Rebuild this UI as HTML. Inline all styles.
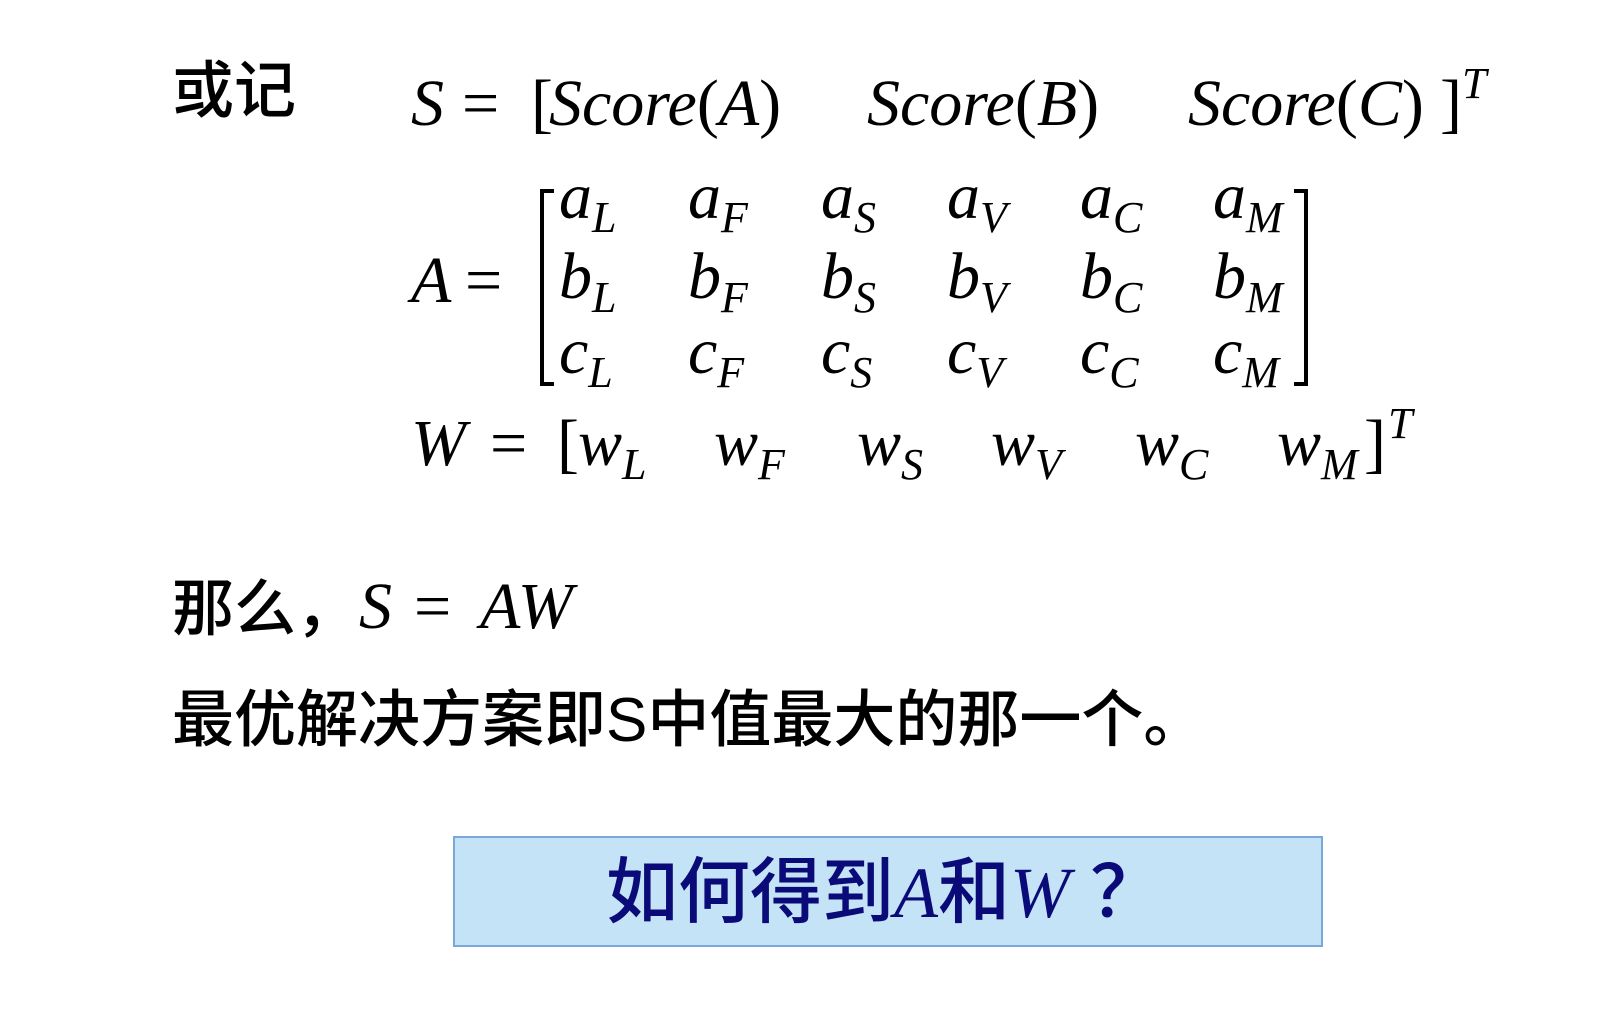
<!DOCTYPE html>
<html><head><meta charset="utf-8"><style>
body{margin:0;width:1614px;height:1026px;background:#fff;position:relative;overflow:hidden}
.c{position:absolute;font-family:"Liberation Sans","Noto Sans CJK SC",sans-serif;font-weight:500;line-height:1;color:#000;white-space:nowrap}
.m{position:absolute;font-family:"Liberation Serif",serif;font-style:italic;font-size:66px;line-height:1;color:#000;white-space:nowrap}
.u{font-size:44px;position:relative;top:14px}
.n{font-style:normal}
.box{position:absolute;left:453px;top:836px;width:866px;height:107px;background:#c5e3f7;border:2px solid #7ba7db}
</style></head><body>
<div class="c" style="left:172px;top:61px;font-size:62px">或记</div>
<div class="m" style="left:411px;top:71px">S</div>
<div class="m n" style="left:462px;top:71px">=</div>
<div class="m n" style="left:531px;top:71px">[</div>
<div class="m" style="left:549px;top:71px">Score<span class="n">(</span>A<span class="n">)</span></div>
<div class="m" style="left:867px;top:71px">Score<span class="n">(</span>B<span class="n">)</span></div>
<div class="m" style="left:1188px;top:71px">Score<span class="n">(</span>C<span class="n">)</span></div>
<div class="m n" style="left:1440px;top:71px">]</div>
<div class="m" style="left:1462px;top:62px;font-size:44px">T</div>

<div class="m" style="left:411px;top:248px">A</div>
<div class="m n" style="left:465px;top:248px">=</div>
<div style="position:absolute;left:540px;top:189px;width:10px;height:189px;border:4px solid #000;border-right:none"></div>
<div style="position:absolute;left:1294px;top:189px;width:10px;height:189px;border:4px solid #000;border-left:none"></div>

<div class="m" style="left:559px;top:164px">a<span class="u">L</span></div>
<div class="m" style="left:688px;top:164px">a<span class="u">F</span></div>
<div class="m" style="left:821px;top:164px">a<span class="u">S</span></div>
<div class="m" style="left:947px;top:164px">a<span class="u">V</span></div>
<div class="m" style="left:1080px;top:164px">a<span class="u">C</span></div>
<div class="m" style="left:1213px;top:164px">a<span class="u">M</span></div>

<div class="m" style="left:559px;top:244px">b<span class="u">L</span></div>
<div class="m" style="left:688px;top:244px">b<span class="u">F</span></div>
<div class="m" style="left:821px;top:244px">b<span class="u">S</span></div>
<div class="m" style="left:947px;top:244px">b<span class="u">V</span></div>
<div class="m" style="left:1080px;top:244px">b<span class="u">C</span></div>
<div class="m" style="left:1213px;top:244px">b<span class="u">M</span></div>

<div class="m" style="left:559px;top:319px">c<span class="u">L</span></div>
<div class="m" style="left:688px;top:319px">c<span class="u">F</span></div>
<div class="m" style="left:821px;top:319px">c<span class="u">S</span></div>
<div class="m" style="left:947px;top:319px">c<span class="u">V</span></div>
<div class="m" style="left:1080px;top:319px">c<span class="u">C</span></div>
<div class="m" style="left:1213px;top:319px">c<span class="u">M</span></div>

<div class="m" style="left:411px;top:411px">W</div>
<div class="m n" style="left:490px;top:411px">=</div>
<div class="m n" style="left:557px;top:411px">[</div>
<div class="m" style="left:578px;top:411px">w<span class="u">L</span></div>
<div class="m" style="left:714px;top:411px">w<span class="u">F</span></div>
<div class="m" style="left:857px;top:411px">w<span class="u">S</span></div>
<div class="m" style="left:991px;top:411px">w<span class="u">V</span></div>
<div class="m" style="left:1135px;top:411px">w<span class="u">C</span></div>
<div class="m" style="left:1277px;top:411px">w<span class="u">M</span></div>
<div class="m n" style="left:1364px;top:411px">]</div>
<div class="m" style="left:1388px;top:402px;font-size:44px">T</div>

<div class="c" style="left:172px;top:579px;font-size:62px">那么，</div>
<div class="m" style="left:359px;top:574px">S</div>
<div class="m n" style="left:414px;top:574px">=</div>
<div class="m" style="left:480px;top:574px">AW</div>

<div class="c" style="left:172px;top:690px;font-size:62px">最优解决方案即S中值最大的那一个。</div>

<div class="box"></div>
<div class="c" style="left:606px;top:857px;font-size:72px;color:#0a0a78">如何得到<span style="font-family:'Liberation Serif',serif;font-style:italic;font-weight:400">A</span>和<span style="font-family:'Liberation Serif',serif;font-style:italic;font-weight:400">W</span> ？</div>
</body></html>
